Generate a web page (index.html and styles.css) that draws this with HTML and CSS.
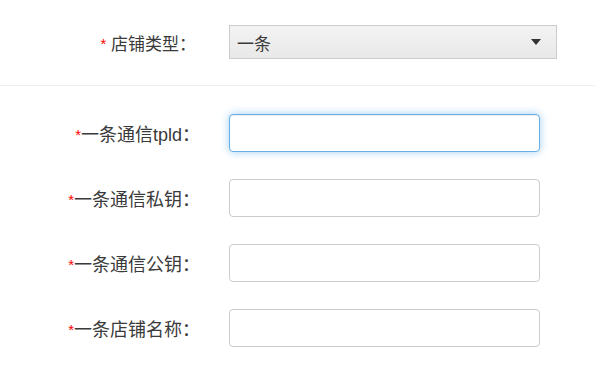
FILE: index.html
```html
<!DOCTYPE html>
<html lang="zh-CN">
<head>
  <meta charset="UTF-8">
  <title>店铺设置</title>
  <link rel="stylesheet" href="styles.css">
</head>
<body>
  <div class="section top">
    <div class="row">
      <label class="label label-sm"><span class="star">*</span> 店铺类型：</label>
      <div class="select">
        <span>一条</span>
        <svg class="caret" width="10" height="6" viewBox="0 0 10 6"><path d="M0 0 H10 L5 6 Z" fill="#333"/></svg>
      </div>
    </div>
  </div>
  <div class="section fields">
    <div class="row">
      <label class="label"><span class="star">*</span>一条通信tpld：</label>
      <input class="input focus" type="text">
    </div>
    <div class="row">
      <label class="label"><span class="star">*</span>一条通信私钥：</label>
      <input class="input" type="text">
    </div>
    <div class="row">
      <label class="label"><span class="star">*</span>一条通信公钥：</label>
      <input class="input" type="text">
    </div>
    <div class="row">
      <label class="label"><span class="star">*</span>一条店铺名称：</label>
      <input class="input" type="text">
    </div>
  </div>
</body>
</html>
```

FILE: styles.css
```css
body {
  margin: 0;
  font-family: "Liberation Sans", "Noto Sans CJK JP", sans-serif;
  font-size: 16px;
  color: #3a3a3a;
  background: #fff;
}

.section.top {
  padding: 25px 0 26px;
  border-bottom: 1px solid #f0f0f0;
}

.section.fields {
  padding-top: 28px;
  display: flex;
  flex-direction: column;
  gap: 27px;
}

.row {
  display: flex;
  align-items: center;
}

.label {
  width: 200px;
  text-align: right;
  margin-right: 29px;
  white-space: nowrap;
  font-size: 18px;
}

.label-sm {
  font-size: 17px;
  box-sizing: border-box;
  padding-right: 4px;
}

.star {
  color: #f00;
  font-size: 15px;
  vertical-align: 1px;
}

.select {
  box-sizing: border-box;
  width: 328px;
  height: 34px;
  display: flex;
  align-items: center;
  padding: 0 15px 0 7px;
  border: 1px solid #ccc;
  background: linear-gradient(#f3f3f3, #e8e8e8);
  font-size: 17px;
}

.caret {
  margin-left: auto;
}

.input {
  box-sizing: border-box;
  width: 311px;
  height: 38px;
  margin: 0;
  border: 1px solid #ccc;
  border-radius: 4px;
  outline: none;
  font-size: 16px;
}

.input.focus {
  border-color: #66afe9;
  box-shadow: inset 0 1px 1px rgba(0, 0, 0, .075), 0 0 8px rgba(102, 175, 233, .6);
}
```
